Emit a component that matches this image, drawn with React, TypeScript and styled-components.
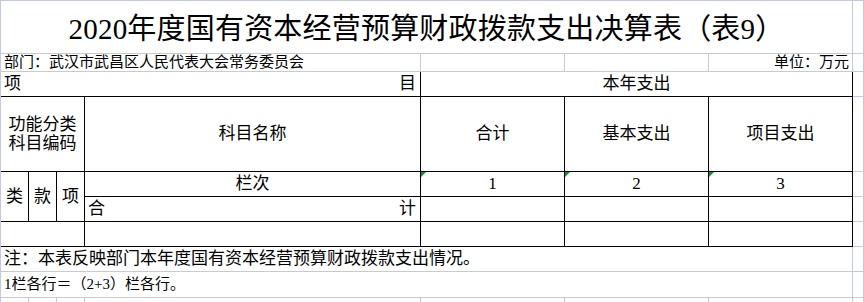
import React from "react";
import styled, { createGlobalStyle, css } from "styled-components";

const GRID = "#c3cade";
const INK = "#000000";

const Global = createGlobalStyle`
  html, body { margin: 0; padding: 0; background: #ffffff; }
  body { font-family: "Liberation Serif", "Noto Sans CJK SC", serif; color: #000; }
`;

const Sheet = styled.div`
  display: grid;
  grid-template-columns: 28px 28px 28px 336px 144px 144px 144px 11px;
  grid-template-rows: 53px 18px 25px 75px 25px 25px 25px 25px 26px 25px;
  width: 864px;
  height: 302px;
  overflow: hidden;
  border-left: 1px solid ${GRID};
  border-top: 1px solid ${GRID};
  box-sizing: border-box;
`;

type CellProps = {
  $c: number;
  $cs?: number;
  $r: number;
  $rs?: number;
  $right?: "k" | "g";
  $bottom?: "k" | "g";
  $align?: "left" | "center" | "right" | "spread";
  $size?: number;
  $flag?: boolean;
};

const Cell = styled.div<CellProps>`
  box-sizing: border-box;
  position: relative;
  grid-column: ${(p) => p.$c} / span ${(p) => p.$cs ?? 1};
  grid-row: ${(p) => p.$r} / span ${(p) => p.$rs ?? 1};
  border-right: 1px solid ${(p) => (p.$right === "k" ? INK : GRID)};
  border-bottom: 1px solid ${(p) => (p.$bottom === "k" ? INK : GRID)};
  display: flex;
  align-items: center;
  font-size: ${(p) => p.$size ?? 17}px;
  line-height: 1.15;
  white-space: nowrap;
  padding: 0 3px;
  ${(p) =>
    p.$align === "center" &&
    css`
      justify-content: center;
      text-align: center;
    `}
  ${(p) =>
    p.$align === "right" &&
    css`
      justify-content: flex-end;
    `}
  ${(p) =>
    p.$align === "spread" &&
    css`
      justify-content: space-between;
      padding: 0 4px 0 3px;
    `}
  ${(p) =>
    p.$flag &&
    css`
      &::before {
        content: "";
        position: absolute;
        left: 0;
        top: 0;
        width: 0;
        height: 0;
        border-top: 5px solid #1f8f1f;
        border-right: 5px solid transparent;
      }
    `}
`;

const Title = styled(Cell)`
  font-size: 29px;
  padding-top: 6px;
  letter-spacing: 0.2px;
`;

const Stack = styled.div`
  display: flex;
  flex-direction: column;
  align-items: center;
  line-height: 19px;
`;

const Filler = ({ r }: { r: number }) => <Cell $c={8} $r={r} />;

export default function App() {
  const rows = [1, 2, 3, 4, 5, 6, 7, 8, 9, 10];
  return (
    <>
      <Global />
      <Sheet>
        <Title $c={1} $cs={7} $r={1} $align="center">
          2020年度国有资本经营预算财政拨款支出决算表（表9）
        </Title>

        <Cell $c={1} $cs={4} $r={2} $size={15}>
          部门：武汉市武昌区人民代表大会常务委员会
        </Cell>
        <Cell $c={5} $r={2} />
        <Cell $c={6} $r={2} />
        <Cell $c={7} $r={2} $size={15} $align="right">
          单位：万元
        </Cell>

        <Cell $c={1} $cs={4} $r={3} $right="k" $bottom="k" $align="spread">
          <span>项</span>
          <span>目</span>
        </Cell>
        <Cell $c={5} $cs={3} $r={3} $right="k" $bottom="k" $align="center">
          本年支出
        </Cell>

        <Cell $c={1} $cs={3} $r={4} $right="k" $bottom="k" $align="center">
          <Stack>
            <span>功能分类</span>
            <span>科目编码</span>
          </Stack>
        </Cell>
        <Cell $c={4} $r={4} $right="k" $bottom="k" $align="center">
          科目名称
        </Cell>
        <Cell $c={5} $r={4} $right="k" $bottom="k" $align="center">
          合计
        </Cell>
        <Cell $c={6} $r={4} $right="k" $bottom="k" $align="center">
          基本支出
        </Cell>
        <Cell $c={7} $r={4} $right="k" $bottom="k" $align="center">
          项目支出
        </Cell>

        <Cell $c={1} $r={5} $rs={2} $right="k" $bottom="k" $align="center">
          类
        </Cell>
        <Cell $c={2} $r={5} $rs={2} $right="k" $bottom="k" $align="center">
          款
        </Cell>
        <Cell $c={3} $r={5} $rs={2} $right="k" $bottom="k" $align="center">
          项
        </Cell>
        <Cell $c={4} $r={5} $right="k" $bottom="k" $align="center">
          栏次
        </Cell>
        <Cell $c={5} $r={5} $right="k" $bottom="k" $align="center" $flag>
          1
        </Cell>
        <Cell $c={6} $r={5} $right="k" $bottom="k" $align="center" $flag>
          2
        </Cell>
        <Cell $c={7} $r={5} $right="k" $bottom="k" $align="center" $flag>
          3
        </Cell>

        <Cell $c={4} $r={6} $right="k" $bottom="k" $align="spread">
          <span>合</span>
          <span>计</span>
        </Cell>
        <Cell $c={5} $r={6} $right="k" $bottom="k" />
        <Cell $c={6} $r={6} $right="k" $bottom="k" />
        <Cell $c={7} $r={6} $right="k" $bottom="k" />

        <Cell $c={1} $cs={3} $r={7} $right="k" $bottom="k" />
        <Cell $c={4} $r={7} $right="k" $bottom="k" />
        <Cell $c={5} $r={7} $right="k" $bottom="k" />
        <Cell $c={6} $r={7} $right="k" $bottom="k" />
        <Cell $c={7} $r={7} $right="k" $bottom="k" />

        <Cell $c={1} $cs={7} $r={8}>
          注：本表反映部门本年度国有资本经营预算财政拨款支出情况。
        </Cell>
        <Cell $c={1} $cs={7} $r={9} $size={15}>
          1栏各行＝（2+3）栏各行。
        </Cell>

        <Cell $c={1} $r={10} />
        <Cell $c={2} $r={10} />
        <Cell $c={3} $r={10} />
        <Cell $c={4} $r={10} />
        <Cell $c={5} $r={10} />
        <Cell $c={6} $r={10} />
        <Cell $c={7} $r={10} />

        {rows.map((r) => (
          <Filler key={r} r={r} />
        ))}
      </Sheet>
    </>
  );
}
